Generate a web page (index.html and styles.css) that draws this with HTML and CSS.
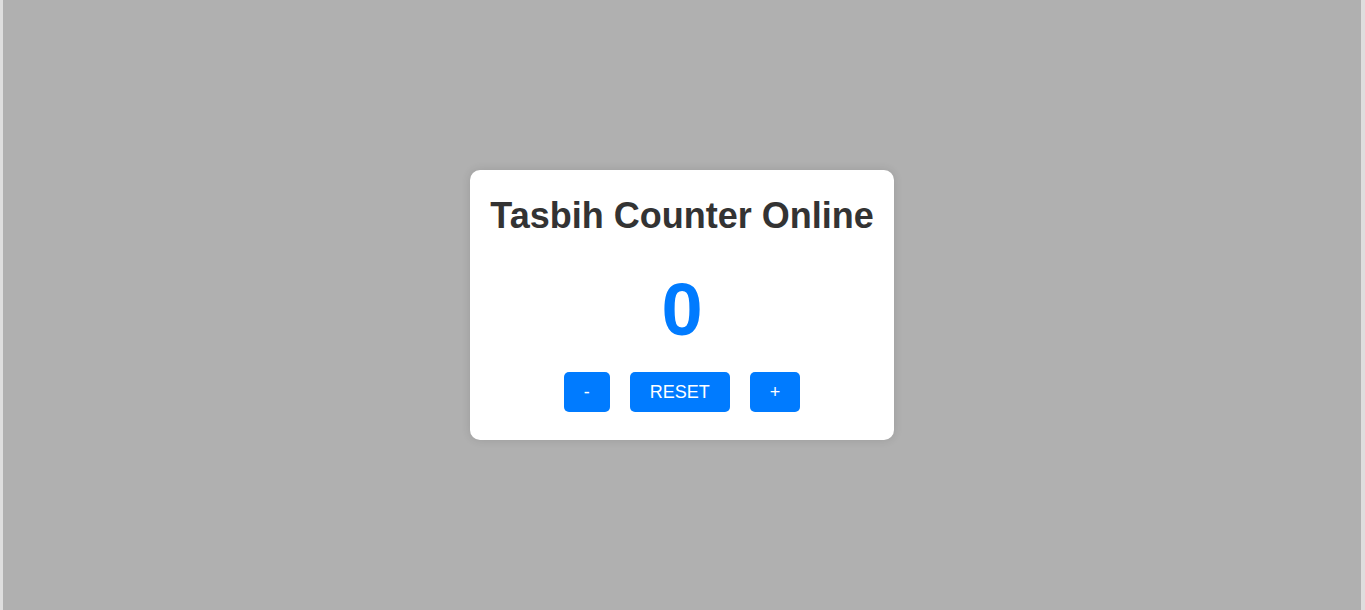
FILE: index.html
```html
<!DOCTYPE html>
<html lang="en">
<head>
<meta charset="utf-8">
<title>Tasbih Counter Online</title>
<link rel="stylesheet" href="styles.css">
</head>
<body>
<main class="page">
  <div class="card">
    <h1 class="title">Tasbih Counter Online</h1>
    <div class="count">0</div>
    <div class="controls">
      <button class="btn">-</button>
      <button class="btn">RESET</button>
      <button class="btn">+</button>
    </div>
  </div>
</main>
</body>
</html>
```
FILE: styles.css
```css
html, body {
  margin: 0;
  padding: 0;
  height: 100%;
}
body {
  background: #dedede;
  font-family: "Liberation Sans", Arial, sans-serif;
  padding: 0 4px 0 3px;
  box-sizing: border-box;
}
.page {
  height: 100%;
  background: #b0b0b0;
  display: flex;
  align-items: center;
  justify-content: center;
}
.card {
  background: #fff;
  border-radius: 10px;
  padding: 26px 20px 28px;
  box-shadow: 0 0 10px rgba(0, 0, 0, 0.12);
  text-align: center;
}
.title {
  margin: 0 0 34px;
  font-size: 36px;
  line-height: 40px;
  font-weight: bold;
  color: #333;
}
.count {
  margin: 0 0 22px;
  font-size: 74px;
  line-height: 80px;
  font-weight: bold;
  color: #007bff;
}
.controls {
  display: flex;
  justify-content: center;
  gap: 20px;
}
.btn {
  font-family: "Liberation Sans", Arial, sans-serif;
  font-size: 18px;
  line-height: 20px;
  padding: 10px 20px;
  border: none;
  border-radius: 5px;
  background: #007bff;
  color: #fff;
  cursor: pointer;
}
```
